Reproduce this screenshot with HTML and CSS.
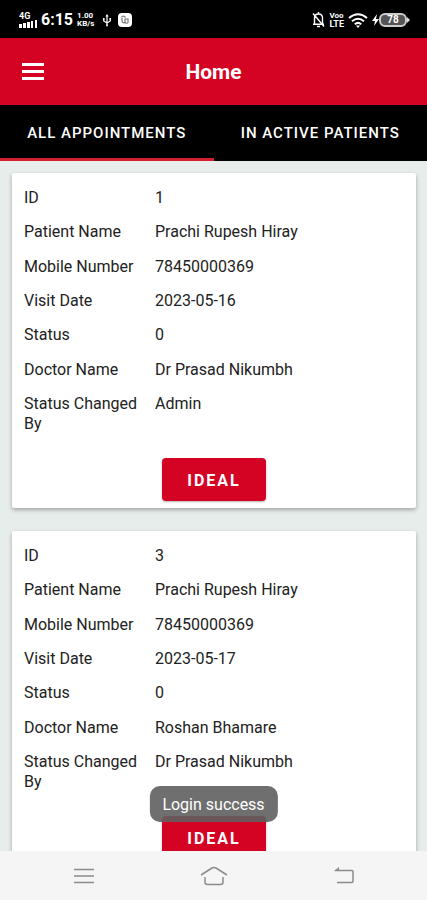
FILE: index.html
```html
<!DOCTYPE html>
<html lang="en">
<head>
<meta charset="utf-8">
<meta name="viewport" content="width=device-width, initial-scale=1">
<title>Home</title>
<link rel="stylesheet" href="styles.css">
</head>
<body>
<div class="screen">
  <div class="status-bar">
    <div class="status-group">
      <div class="signal">
        <span class="tiny network">4G</span>
        <svg width="18" height="8" viewBox="0 0 18 8" fill="#fff" aria-hidden="true"><path d="M0 4h3v4H0zM4 3h3v5H4zM8 2h3v6H8zM12 1h2v7h-2zM16 0h2v8h-2z"/></svg>
      </div>
      <span class="clock">6:15</span>
      <div class="stack"><span class="tiny">1.00</span><span class="tiny">KB/s</span></div>
      <svg class="usb" width="10" height="13" viewBox="0 0 12 16" fill="none" stroke="#fff" stroke-width="1.5" aria-hidden="true"><path d="M6 2v12M6 11L2 8.500V6M6 11l4-2.500V6"/><path d="M6 0l2 3H4zM1 5h2v2H1zM9 5h2v2H9zM5 13h2v2H5z" fill="#fff" stroke="none"/></svg>
      <svg width="14" height="14" viewBox="0 0 14 14" aria-hidden="true"><rect width="14" height="14" rx="4" fill="#fff"/><path d="M3.500 4.500a2 2 0 0 1 3-1l1 1M4 5v3q1 3 3 1V6h3v3.500q-1 1.500-3 0" fill="none" stroke="#777" stroke-width="1.200"/></svg>
    </div>
    <div class="status-group status-right">
      <svg width="13" height="16" viewBox="0 0 13 16" fill="none" stroke="#fff" stroke-width="1.400" aria-hidden="true"><path d="M2.500 12V6q0-4 4-4t4 4v6M1 12.300h11M5 14.500h3M1 1.500l11 13M6.500 0v2"/></svg>
      <div class="stack volte"><span class="tiny">Voo</span><span class="lte">LTE</span></div>
      <svg width="20" height="15" viewBox="0 0 20 15" fill="none" stroke="#fff" stroke-width="2" aria-hidden="true"><path d="M1 5q9-7.500 18 0M4 8.300q6-5 12 0M6.800 11.200q3.200-2.600 6.400 0"/><path d="M8 12.500h4L10 15z" fill="#fff" stroke="none"/></svg>
      <div class="power">
        <svg width="7" height="12" viewBox="0 0 7 12" fill="#fff" aria-hidden="true"><path d="M5 0L0 7h3l-1 5 5-7H4z"/></svg>
        <span class="battery">78</span>
        <svg width="3" height="6" viewBox="0 0 3 6" fill="#ddd" aria-hidden="true"><path d="M0 0l3 3-3 3z"/></svg>
      </div>
    </div>
  </div>

  <header class="app-bar">
    <button class="menu" type="button" aria-label="Menu">
      <svg width="22" height="18" viewBox="0 0 22 18" fill="#fff" aria-hidden="true"><path d="M0 0h22v3H0zM0 7h22v3H0zM0 14h22v3H0z"/></svg>
    </button>
    <h1>Home</h1>
  </header>

  <nav class="tabs">
    <button class="tab active" type="button">ALL APPOINTMENTS</button>
    <button class="tab" type="button">IN ACTIVE PATIENTS</button>
  </nav>

  <main class="list">
    <article class="card">
      <dl>
        <div><dt>ID</dt><dd>1</dd></div>
        <div><dt>Patient Name</dt><dd>Prachi Rupesh Hiray</dd></div>
        <div><dt>Mobile Number</dt><dd>78450000369</dd></div>
        <div><dt>Visit Date</dt><dd>2023-05-16</dd></div>
        <div><dt>Status</dt><dd>0</dd></div>
        <div><dt>Doctor Name</dt><dd>Dr Prasad Nikumbh</dd></div>
        <div><dt>Status Changed By</dt><dd>Admin</dd></div>
      </dl>
      <button class="action" type="button">IDEAL</button>
    </article>
    <article class="card">
      <dl>
        <div><dt>ID</dt><dd>3</dd></div>
        <div><dt>Patient Name</dt><dd>Prachi Rupesh Hiray</dd></div>
        <div><dt>Mobile Number</dt><dd>78450000369</dd></div>
        <div><dt>Visit Date</dt><dd>2023-05-17</dd></div>
        <div><dt>Status</dt><dd>0</dd></div>
        <div><dt>Doctor Name</dt><dd>Roshan Bhamare</dd></div>
        <div><dt>Status Changed By</dt><dd>Dr Prasad Nikumbh</dd></div>
      </dl>
      <button class="action" type="button">IDEAL</button>
    </article>
  </main>

  <div class="toast" role="status">Login success</div>

  <nav class="system-nav">
    <button type="button" aria-label="Recent apps"><svg width="20" height="16" viewBox="0 0 20 16" stroke="#8c8c8c" stroke-width="1.500" aria-hidden="true"><path d="M0 1.500h20M0 8h20M0 14.500h20"/></svg></button>
    <button type="button" aria-label="Home"><svg width="28" height="20" viewBox="0 0 28 20" fill="none" stroke="#8c8c8c" stroke-width="1.500" aria-hidden="true"><path d="M1 9L12 2q2-1 4 0l11 7M5 11v5q0 2.500 2.500 2.500h13Q23 18.500 23 16v-5"/></svg></button>
    <button type="button" aria-label="Back"><svg width="20" height="18" viewBox="0 0 20 18" fill="none" stroke="#8c8c8c" stroke-width="1.500" aria-hidden="true"><path d="M1 3.500h17q1 0 1 1v10q0 1-1 1H3"/><path d="M0 4L5 0v4z" fill="#8c8c8c" stroke="none"/></svg></button>
  </nav>
</div>
</body>
</html>
```
FILE: styles.css
```css
* {
  box-sizing: border-box;
}

body {
  margin: 0;
  font-family: Roboto, "Liberation Sans", sans-serif;
  font-size: 16px;
  line-height: 20px;
  color: #222;
}

button {
  border: 0;
  padding: 0;
  background: none;
  color: inherit;
  font: inherit;
}

svg {
  display: block;
  flex: none;
}

.screen {
  position: relative;
  display: flex;
  flex-direction: column;
  height: 100vh;
  overflow: hidden;
  background: #e7edea;
}

.status-bar {
  display: flex;
  flex: none;
  justify-content: space-between;
  align-items: center;
  height: 38px;
  padding: 2px 17px 0 19px;
  background: #000;
  color: #fff;
}

.status-group {
  display: flex;
  align-items: center;
  gap: 4px;
}

.status-right {
  gap: 4px;
}

.clock {
  font-size: 16px;
  font-weight: 700;
}

.stack,
.signal {
  display: flex;
  flex-direction: column;
}

.tiny {
  font-size: 8px;
  font-weight: 700;
  line-height: 8px;
}

.network {
  font-size: 9px;
}

.lte {
  font-size: 9px;
  font-weight: 700;
  line-height: 8px;
}

.usb {
  margin: 0 2px 0 4px;
}

.power {
  display: flex;
  align-items: center;
}

.battery {
  width: 28px;
  border: 2px solid #ccc;
  border-radius: 6px;
  background: #555;
  font-size: 10px;
  font-weight: 700;
  line-height: 10px;
  text-align: center;
}

.app-bar {
  display: grid;
  flex: none;
  grid-template-columns: 1fr auto 1fr;
  align-items: center;
  height: 67px;
  padding: 0 22px;
  background: #d50323;
  color: #fff;
}

.menu {
  justify-self: start;
}

.app-bar h1 {
  margin: 0;
  font-size: 21px;
  font-weight: 700;
  line-height: 24px;
}

.tabs {
  display: grid;
  flex: none;
  grid-template-columns: 1fr 1fr;
  height: 56px;
  background: #000;
  color: #fff;
}

.tab {
  padding-top: 3px;
  border-bottom: 3px solid transparent;
  font-size: 15px;
  font-weight: 500;
  letter-spacing: 1px;
}

.tab.active {
  border-bottom-color: #d3202c;
}

.list {
  display: flex;
  flex: 1;
  flex-direction: column;
  gap: 23px;
  min-height: 0;
  padding: 12px 11px 0 12px;
  overflow: hidden;
}

.card {
  display: flex;
  flex: none;
  flex-direction: column;
  align-items: center;
  gap: 24px;
  padding: 15px 12px 7px;
  border-radius: 2px;
  background: #fff;
  box-shadow: 0 2px 4px rgba(0, 0, 0, 0.3);
}

dl {
  display: flex;
  flex-direction: column;
  justify-content: space-between;
  width: 100%;
  min-height: 246px;
  margin: 0;
}

dl > div {
  display: grid;
  grid-template-columns: 119px 1fr;
  column-gap: 12px;
}

dd {
  margin: 0;
}

.action {
  height: 43px;
  padding: 2px 25px 0;
  border-radius: 4px;
  background: #d50323;
  box-shadow: 0 1px 2px rgba(0, 0, 0, 0.3);
  color: #fff;
  font-weight: 700;
  letter-spacing: 2px;
}

.toast {
  position: absolute;
  bottom: 78px;
  left: 50%;
  padding: 9px 13px 7px;
  border-radius: 10px;
  background: rgba(95, 95, 95, 0.9);
  color: #fff;
  white-space: nowrap;
  transform: translateX(-50%);
}

.system-nav {
  display: flex;
  flex: none;
  justify-content: space-between;
  align-items: center;
  height: 49px;
  padding: 0 73px 0 74px;
  background: #f5f5f5;
}
```
